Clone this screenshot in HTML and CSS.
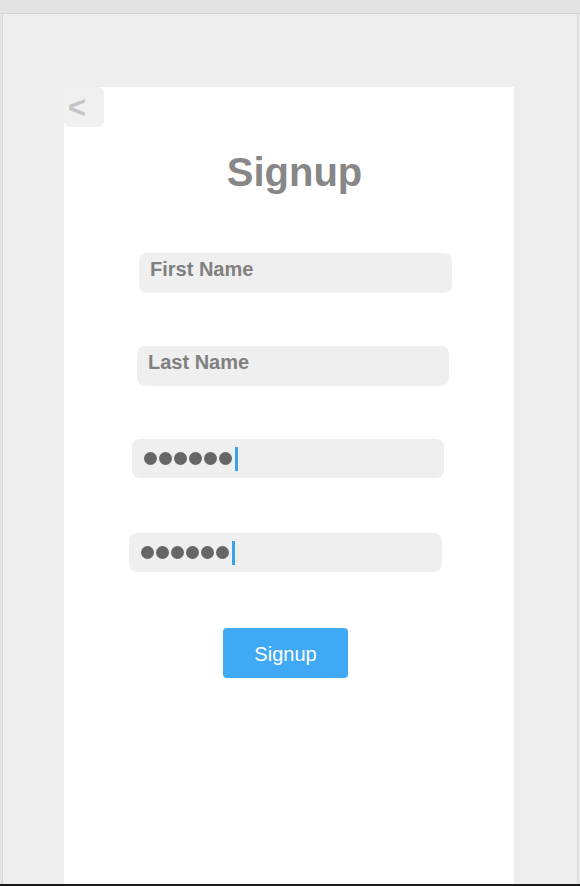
FILE: index.html
```html
<!DOCTYPE html>
<html>
<head>
<meta charset="utf-8">
<link rel="stylesheet" href="styles.css">
</head>
<body>
<div class="window">
  <div class="topbar"></div>
  <div class="screen">
    <div class="card">
      <div class="back">&lt;</div>
      <h1 class="title">Signup</h1>
      <div class="field field-first"><span class="placeholder">First Name</span></div>
      <div class="field field-last"><span class="placeholder">Last Name</span></div>
      <div class="field field-pw1">
        <span class="dots"><i></i><i></i><i></i><i></i><i></i><i></i></span><span class="caret"></span>
      </div>
      <div class="field field-pw2">
        <span class="dots"><i></i><i></i><i></i><i></i><i></i><i></i></span><span class="caret"></span>
      </div>
      <div class="btn-row"><button class="btn">Signup</button></div>
    </div>
  </div>
</div>
</body>
</html>
```
FILE: styles.css
```css
html, body {
  margin: 0;
  padding: 0;
  background: #e6e6e6;
  font-family: "Liberation Sans", Arial, sans-serif;
}
.window {
  width: 580px;
  height: 886px;
  display: flex;
  flex-direction: column;
  box-sizing: border-box;
  border-bottom: 2px solid #1a1a1a;
  overflow: hidden;
}
.topbar {
  height: 13px;
  background: #e3e3e3;
  border-bottom: 1px solid #d4d4d4;
  flex: none;
}
.screen {
  flex: 1;
  margin-left: 2px;
  margin-right: 2px;
  background: #eeeeee;
  border-left: 1px solid #d9d9d9;
  border-right: 1px solid #d9d9d9;
  padding-top: 73px;
  display: flex;
  min-height: 0;
}
.card {
  margin-left: 61px;
  width: 450px;
  background: #ffffff;
  display: flex;
  flex-direction: column;
}
.back {
  width: 40px;
  height: 40px;
  background: #f0f0f0;
  border-radius: 0 6px 6px 6px;
  color: #c6c6c6;
  font-weight: bold;
  font-size: 31px;
  line-height: 42px;
  text-indent: 4px;
}
.title {
  margin: 22px 0 0 0;
  font-size: 40px;
  line-height: 46px;
  font-weight: bold;
  color: #878787;
  text-align: center;
  padding-left: 11px;
}
.field {
  height: 40px;
  width: 313px;
  background: #efefef;
  border-radius: 8px;
  box-sizing: border-box;
  display: flex;
  align-items: flex-start;
}
.placeholder {
  font-size: 20px;
  line-height: 23px;
  font-weight: bold;
  color: #808080;
  padding: 5px 0 0 11px;
}
.field-first { margin: 58px 0 0 75px; }
.field-last { margin: 53px 0 0 73px; width: 312px; }
.field-pw1 { margin: 53px 0 0 68px; width: 312px; height: 39px; align-items: center; padding-left: 12px; }
.field-pw2 { margin: 55px 0 0 65px; width: 313px; height: 39px; align-items: center; padding-left: 12px; }
.dots {
  display: flex;
  gap: 2px;
}
.dots i {
  display: block;
  width: 13px;
  height: 13px;
  border-radius: 50%;
  background: #666666;
}
.caret {
  display: block;
  width: 3px;
  height: 24px;
  background: #3aa4ea;
  margin-left: 3px;
}
.btn-row {
  margin: 56px 0 0 159px;
}
.btn {
  width: 125px;
  height: 50px;
  border: none;
  border-radius: 4px;
  background: #3fa9f5;
  color: #ffffff;
  font-family: "Liberation Sans", Arial, sans-serif;
  font-size: 20px;
  padding: 3px 0 0 0;
}
```
